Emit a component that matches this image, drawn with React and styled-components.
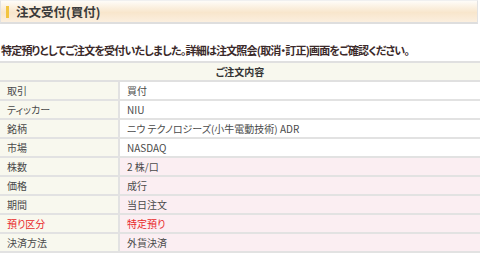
import React from "react";
import styled, { createGlobalStyle } from "styled-components";

const GlobalStyle = createGlobalStyle`
  body {
    margin: 0;
    background: #fff;
    font-family: "Noto Sans CJK JP", "Liberation Sans", sans-serif;
    font-feature-settings: "palt";
    color: #333;
  }
`;

const Page = styled.div`
  width: 480px;
`;

const TitleBar = styled.div`
  width: 478px;
  height: 24px;
  box-sizing: border-box;
  display: flex;
  align-items: center;
  gap: 7px;
  padding-left: 5px;
  border: 1px solid #e2e2e2;
  border-top-color: #f0f0f0;
  border-bottom: 2px solid #dedede;
  background: linear-gradient(#fefcf8 0%, #f8e6cc 55%, #fbefdf 100%);
`;

const Marker = styled.span`
  width: 3px;
  height: 12px;
  background: #f2c440;
`;

const Title = styled.h1`
  margin: 0;
  font-size: 12.5px;
  font-weight: 700;
  color: #3a3a3a;
`;

const Message = styled.p`
  margin: 0;
  padding: 0 0 3px 1px;
  height: 37px;
  box-sizing: border-box;
  display: flex;
  align-items: flex-end;
  font-size: 11px;
  font-weight: 700;
  letter-spacing: -0.8px;
  color: #3b2a2a;
  white-space: nowrap;
`;

const Table = styled.table`
  width: 480px;
  border-collapse: collapse;
  border-top: 2px solid #e0e0e0;
  font-size: 10px;
`;

const HeadCell = styled.th`
  height: 17px;
  padding: 0;
  background: #f8f8ee;
  font-weight: 700;
  color: #333;
  text-align: center;
  border-bottom: 2px solid #e0e0e0;
`;

const Label = styled.td`
  width: 111px;
  height: 17px;
  padding: 0 0 0 7px;
  background: #f8f8ee;
  color: ${(p) => (p.$red ? "#e8282a" : "#4a4a4a")};
  border-bottom: 2px solid #e2e2e2;
  border-right: 2px solid #e2e2e2;
  white-space: nowrap;
`;

const Value = styled.td`
  height: 17px;
  padding: 0 0 0 7px;
  background: ${(p) => (p.$pink ? "#fbeef2" : "#fff")};
  color: ${(p) => (p.$red ? "#e8282a" : "#4a4a4a")};
  border-bottom: 2px solid #e2e2e2;
  white-space: nowrap;
`;

const rows = [
  { label: "取引", value: "買付" },
  { label: "ティッカー", value: "NIU" },
  { label: "銘柄", value: "ニウ テクノロジーズ(小牛電動技術) ADR" },
  { label: "市場", value: "NASDAQ" },
  { label: "株数", value: "2 株/口", pink: true },
  { label: "価格", value: "成行", pink: true },
  { label: "期間", value: "当日注文", pink: true },
  { label: "預り区分", value: "特定預り", pink: true, red: true },
  { label: "決済方法", value: "外貨決済", pink: true },
];

export default function App() {
  return (
    <Page>
      <GlobalStyle />
      <TitleBar>
        <Marker />
        <Title>注文受付(買付)</Title>
      </TitleBar>
      <Message>
        特定預りとしてご注文を受付いたしました。詳細は注文照会(取消・訂正)画面をご確認ください。
      </Message>
      <Table>
        <thead>
          <tr>
            <HeadCell colSpan={2}>ご注文内容</HeadCell>
          </tr>
        </thead>
        <tbody>
          {rows.map((r) => (
            <tr key={r.label}>
              <Label $red={r.red}>{r.label}</Label>
              <Value $pink={r.pink} $red={r.red}>
                {r.value}
              </Value>
            </tr>
          ))}
        </tbody>
      </Table>
    </Page>
  );
}
